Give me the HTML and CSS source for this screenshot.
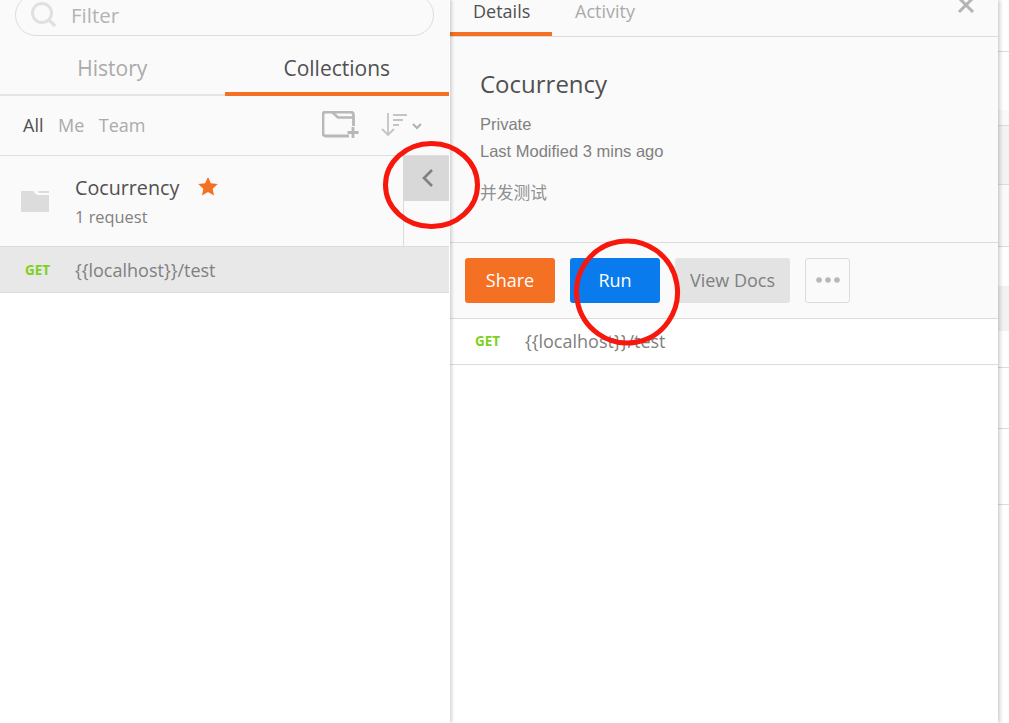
FILE: index.html
```html
<!DOCTYPE html>
<html lang="en">
<head>
<meta charset="utf-8">
<title>Cocurrency</title>
<link rel="stylesheet" href="styles.css">
</head>
<body>
<div class="app">
  <aside class="sidebar">
    <div class="search-row">
      <div class="search">
        <svg class="search-icon" width="28" height="28" viewBox="0 0 28 28"><circle cx="12" cy="12" r="9.5" fill="none" stroke="#e0e0e0" stroke-width="3"/><path d="M19 19l6 6" stroke="#e0e0e0" stroke-width="3.4" fill="none"/></svg>
        <span class="search-text">Filter</span>
      </div>
    </div>
    <div class="side-tabs">
      <div class="side-tab">History</div>
      <div class="side-tab active">Collections</div>
    </div>
    <div class="filter-row">
      <span class="filter on">All</span>
      <span class="filter">Me</span>
      <span class="filter">Team</span>
      <svg class="new-folder" width="38" height="28" viewBox="0 0 38 28"><path d="M27 25H3.500Q1 25 1 22.500V3.500Q1 1 3.500 1H28.500Q31.500 1 31.500 4V15" fill="none" stroke="#b8b8b8" stroke-width="2.800"/><path d="M10 1l6 5.500H31" fill="none" stroke="#b8b8b8" stroke-width="2.400"/><path d="M31 16v11M25.500 21.500h11" stroke="#b8b8b8" stroke-width="2.800" fill="none"/></svg>
      <svg class="sort" width="42" height="26" viewBox="0 0 42 26"><path d="M7 1v22M1 17l6 6 6-6" fill="none" stroke="#c4c4c4" stroke-width="1.800"/><path d="M12 3h14M12 8h10M12 13h6" stroke="#c4c4c4" stroke-width="2.200" fill="none"/><path d="M32 12l4 4 4-4" fill="none" stroke="#b0b0b0" stroke-width="2"/></svg>
    </div>
    <div class="collection">
      <svg class="folder" width="28" height="22" viewBox="0 0 28 22"><path d="M0 1h12l4 4h12v17H0z" fill="#dcdcdc"/><path d="M17 1h11v2H18z" fill="#dcdcdc"/></svg>
      <div class="coll-text">
        <div class="coll-name">Cocurrency <svg class="star" width="20" height="19" viewBox="0 0 20 19"><path d="M10 0l2.900 6.200 6.800.8-5 4.700 1.300 6.800L10 15.100 4 18.500l1.300-6.800-5-4.700 6.800-.8z" fill="#f47023"/></svg></div>
        <div class="coll-count">1 request</div>
      </div>
      <div class="collapse">
        <div class="collapse-btn"><svg width="14" height="20" viewBox="0 0 14 20"><path d="M11 2L3 10l8 8" fill="none" stroke="#808080" stroke-width="2.600"/></svg></div>
      </div>
    </div>
    <div class="req-row selected"><span class="get">GET</span><span class="url">{{localhost}}/test</span></div>
  </aside>
  <main class="detail">
    <div class="detail-tabs">
      <div class="detail-tab active">Details</div>
      <div class="detail-tab">Activity</div>
      <svg class="close" width="18" height="18" viewBox="0 0 18 18"><path d="M2 2l14 14M16 2L2 16" stroke="#b4b4b4" stroke-width="3" fill="none"/></svg>
    </div>
    <section class="info">
      <h1 class="title">Cocurrency</h1>
      <div class="meta">Private</div>
      <div class="meta">Last Modified 3 mins ago</div>
      <div class="desc">并发测试</div>
    </section>
    <div class="actions">
      <button class="btn share">Share</button>
      <button class="btn run">Run</button>
      <button class="btn docs">View Docs</button>
      <button class="btn more"><svg width="24" height="6" viewBox="0 0 24 6"><circle cx="3" cy="3" r="2.800" fill="#b8b8b8"/><circle cx="12" cy="3" r="2.800" fill="#b8b8b8"/><circle cx="21" cy="3" r="2.800" fill="#b8b8b8"/></svg></button>
    </div>
    <div class="req-row detail-req"><span class="get">GET</span><span class="url">{{localhost}}/test</span></div>
  </main>
  <div class="backdrop">
    <div class="strip s1"></div>
    <div class="strip s2"></div>
    <div class="strip s3"></div>
    <div class="strip s4"></div>
    <div class="strip s5"></div>
    <div class="strip s6"></div>
    <div class="strip s7"></div>
    <div class="strip s8"></div>
    <div class="strip s9"></div>
    <div class="strip s10"></div>
  </div>
</div>
<svg class="marks" width="1009" height="723" viewBox="0 0 1009 723">
  <ellipse cx="431.500" cy="185" rx="46" ry="41.500" fill="none" stroke="#f8170c" stroke-width="5"/>
  <ellipse cx="627" cy="292" rx="50.500" ry="51" fill="none" stroke="#f8170c" stroke-width="5" transform="rotate(-10 627 292)"/>
</svg>
</body>
</html>
```
FILE: styles.css
```css
* { box-sizing: border-box; }
html, body { margin: 0; padding: 0; height: 100%; overflow: hidden; background: #fff; }
body { font-family: "Open Sans", "Noto Sans CJK SC", sans-serif; position: relative; }
.app { display: flex; height: 723px; width: 1009px; }

.sidebar { width: 450px; flex: none; display: flex; flex-direction: column; background: #fff; padding-right: 1px; box-shadow: 2px 0 3px rgba(0,0,0,.16); position: relative; z-index: 2; }
.search-row { height: 36px; background: #fafafa; padding: 0 15px; }
.search { height: 42px; margin-top: -6px; border: 1px solid #dedede; border-radius: 21px; display: flex; align-items: center; padding-left: 14px; background: #fafafa; }
.search-icon { flex: none; }
.search-text { margin-left: 13px; font-size: 20.500px; color: #b4b4b4; }

.side-tabs { display: flex; height: 60px; background: #fafafa; border-bottom: 2px solid #e4e4e4; }
.side-tab { flex: 1; text-align: center; font-size: 21px; line-height: 65px; color: #aaa; margin-bottom: -2px; }
.side-tab.active { color: #505050; border-bottom: 4px solid #f47023; }

.filter-row { height: 60px; display: flex; align-items: center; background: #fafafa; border-bottom: 1px solid #e0e0e0; padding: 0 26px 2px 23px; }
.filter { font-size: 18px; color: #aaa; margin-right: 14.500px; }
.filter.on { color: #505050; }
.new-folder { margin-left: auto; }
.sort { margin-left: 21px; }

.collection { height: 91px; display: flex; align-items: flex-start; background: #fafafa; border-bottom: 1px solid #dcdcdc; }
.folder { flex: none; margin: 34px 0 0 21px; }
.coll-text { margin-left: 26px; padding-top: 18px; }
.coll-name { font-size: 19.700px; line-height: 28px; color: #505050; display: flex; align-items: center; }
.star { margin: -3px 0 0 19px; }
.coll-count { font-size: 16.400px; line-height: 22px; margin-top: 4px; color: #808080; }
.collapse { margin-left: auto; width: 46px; height: 90px; border-left: 1px solid #dcdcdc; }
.collapse-btn { height: 45px; margin-left: -1px; background: #d8d8d8; display: flex; align-items: center; justify-content: center; padding: 0 0 2px 4px; }

.req-row { height: 46px; display: flex; align-items: center; }
.req-row.selected { background: #e8e8e8; border-bottom: 1px solid #dcdcdc; padding-left: 25px; }
.get { font-size: 13.500px; font-weight: 700; color: #80d020; width: 50px; flex: none; }
.url { font-size: 18px; color: #808080; }

.detail { width: 548px; flex: none; display: flex; flex-direction: column; background: #fff; box-shadow: 2px 0 4px rgba(0,0,0,.2); position: relative; z-index: 1; }
.detail-tabs { height: 37px; background: #fafafa; border-bottom: 1px solid #dcdcdc; display: flex; position: relative; }
.detail-tab { font-size: 18px; line-height: 24px; color: #aaa; padding: 0 23px; height: 37px; margin-top: -1px; }
.detail-tab.active { color: #505050; border-bottom: 4px solid #f47023; width: 102px; }
.close { position: absolute; right: 23px; top: -4px; }

.info { height: 206px; background: #fafafa; border-bottom: 1px solid #dcdcdc; padding: 30px 30px 0; }
.title { margin: 0 0 10px; font-size: 24px; line-height: 34px; font-weight: 400; color: #505050; }
.meta { font-family: "Liberation Sans", sans-serif; font-size: 16.500px; line-height: 27px; color: #808080; }
.desc { font-family: "Noto Sans CJK SC", sans-serif; font-size: 16.800px; line-height: 24px; color: #909090; margin-top: 15px; }

.actions { height: 76px; background: #fafafa; border-bottom: 1px solid #dcdcdc; padding: 15px 15px 0; display: flex; align-items: flex-start; gap: 15px; }
.btn { height: 45px; border: 0; border-radius: 3px; font-family: inherit; font-size: 18px; padding: 0 0 2px; display: flex; align-items: center; justify-content: center; }
.share { width: 90px; background: #f47023; color: #fff; }
.run { width: 90px; background: #097bed; color: #fff; }
.docs { width: 115px; background: #e3e3e3; color: #808080; }
.more { width: 45px; background: #fafafa; border: 1px solid #dcdcdc; }

.detail-req { border-bottom: 1px solid #dcdcdc; padding: 0 0 2px 25px; }

.backdrop { flex: 1; background: #fff; display: flex; flex-direction: column; }
.strip { flex: none; border-bottom: 1px solid #dcdcdc; }
.s1 { height: 52px; }
.s2 { height: 58px; border-bottom: 0; }
.s3 { height: 16px; background: #fafafa; }
.s4 { height: 59px; background: #f3f3f3; }
.s5 { height: 62px; background: #fafafa; }
.s6 { height: 39px; border-bottom: 0; }
.s7 { height: 45px; background: #f2f2f2; border-bottom: 0; }
.s8 { height: 37px; }
.s9 { height: 61px; }
.s10 { height: 76px; }

.marks { position: absolute; left: 0; top: 0; z-index: 5; pointer-events: none; }
```
